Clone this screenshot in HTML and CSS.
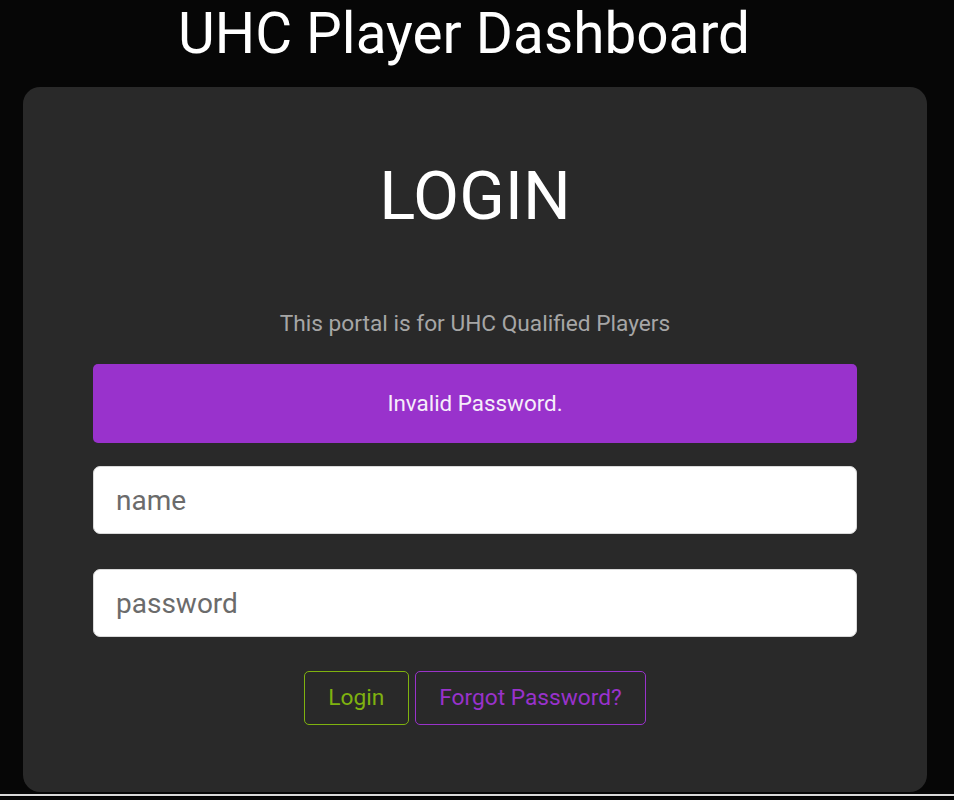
FILE: index.html
```html
<!DOCTYPE html>
<html lang="en">
<head>
<meta charset="utf-8">
<title>UHC Player Dashboard</title>
<link rel="stylesheet" href="styles.css">
</head>
<body>
  <header class="page-header">
    <h1 class="page-title">UHC Player Dashboard</h1>
  </header>
  <main class="card">
    <h2 class="card-title">LOGIN</h2>
    <p class="card-subtitle">This portal is for UHC Qualified Players</p>
    <div class="alert">Invalid Password.</div>
    <form class="login-form">
      <input class="field" type="text" placeholder="name">
      <input class="field" type="password" placeholder="password">
      <div class="actions">
        <button type="button" class="btn btn-login">Login</button>
        <button type="button" class="btn btn-forgot">Forgot Password?</button>
      </div>
    </form>
  </main>
  <div class="footer-rule"></div>
</body>
</html>
```

FILE: styles.css
```css
* { box-sizing: border-box; }

html, body {
  margin: 0;
  padding: 0;
  background: #060606;
  font-family: Roboto, "Liberation Sans", Arial, sans-serif;
  color: #ffffff;
  overflow: hidden;
}

body {
  height: 800px;
}

.page-header {
  padding: 1px 26px 0 0;
  height: 87px;
}

.page-title {
  margin: 0;
  font-size: 56.7px;
  font-weight: 400;
  line-height: 1.16;
  text-align: center;
  color: #ffffff;
}

.card {
  margin-left: 23px;
  width: 904px;
  height: 705px;
  background: #292929;
  border-radius: 17px;
  padding: 70px 70px 0 70px;
  display: flex;
  flex-direction: column;
}

.card-title {
  margin: 0;
  font-size: 67px;
  font-weight: 400;
  line-height: 1.172;
  text-align: center;
  color: #ffffff;
}

.card-subtitle {
  margin: 75px 0 0 0;
  font-size: 22.7px;
  line-height: 1.16;
  text-align: center;
  color: #a6a6a6;
}

.alert {
  margin-top: 27px;
  background: #9932cc;
  color: #f6eefa;
  border-radius: 5px;
  padding: 26.5px 16px;
  font-size: 22.4px;
  line-height: 1.172;
  text-align: center;
}

.login-form {
  margin-top: 23px;
  display: flex;
  flex-direction: column;
  gap: 35px;
}

.field {
  display: block;
  width: 100%;
  height: 68px;
  border: 1px solid #d9d9d9;
  border-radius: 7px;
  background: #ffffff;
  padding: 0 22px;
  font-family: Roboto, "Liberation Sans", Arial, sans-serif;
  font-size: 28px;
  color: #333;
  outline: none;
}

.field::placeholder {
  color: #6b6b6b;
  opacity: 1;
}

.actions {
  display: flex;
  justify-content: center;
  gap: 6px;
  margin-top: -1px;
}

.btn {
  background: transparent;
  font-family: Roboto, "Liberation Sans", Arial, sans-serif;
  font-size: 22.7px;
  line-height: 1.172;
  height: 53.5px;
  padding: 0 23.5px;
  border-radius: 5px;
  border: 1.6px solid;
  cursor: pointer;
}

.btn-login {
  color: #7fb20f;
  border-color: #7fb20f;
}

.btn-forgot {
  color: #9932cc;
  border-color: #9932cc;
}

.footer-rule {
  margin-top: 2px;
  height: 3px;
  border-top: 2px solid #d8d8d8;
  background: #000;
}
```
